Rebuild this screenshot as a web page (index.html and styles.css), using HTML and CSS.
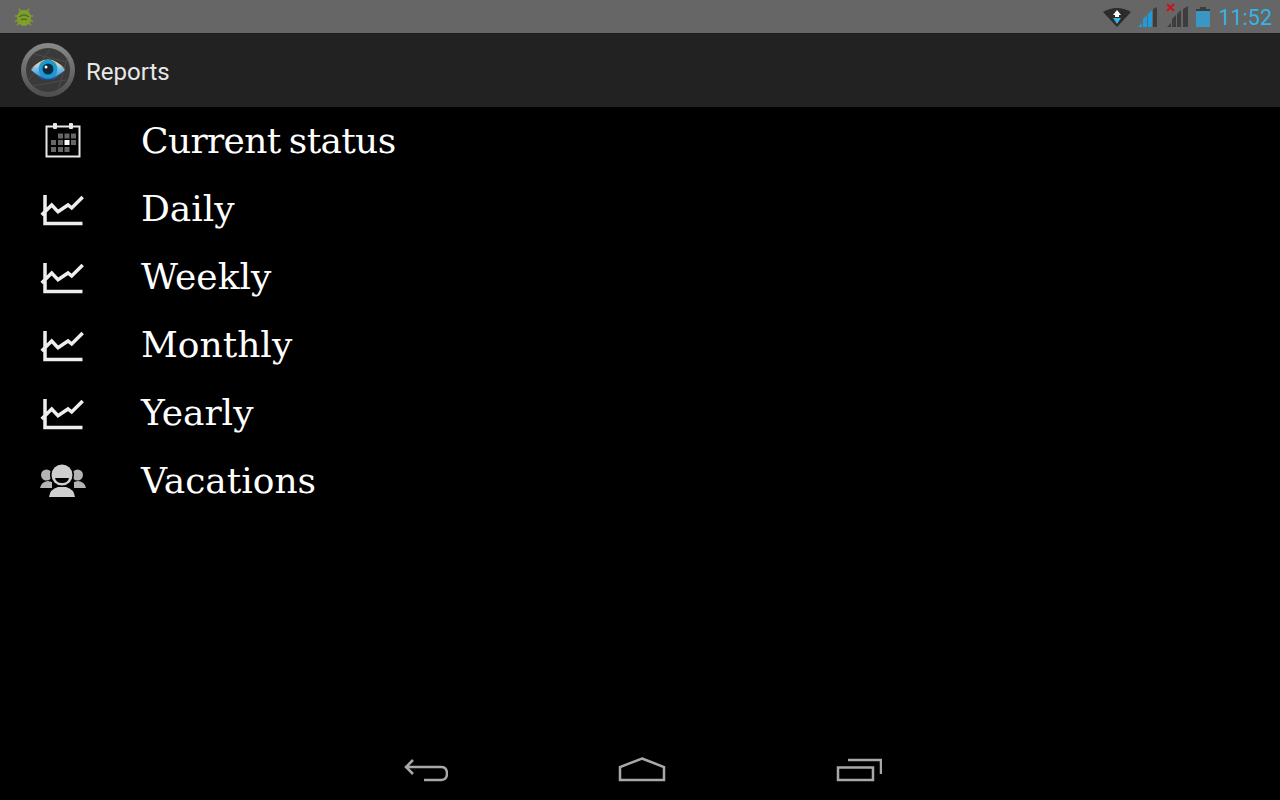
FILE: index.html
```html
<!DOCTYPE html>
<html lang="en">
<head>
  <meta charset="UTF-8">
  <title>Reports</title>
  <link rel="stylesheet" href="styles.css">
</head>
<body>

  <div class="status-bar">
    <svg class="bug soft" width="20" height="20" viewBox="0 0 20 20">
      <path d="M5 2l2 3M15 2l-2 3M1 9h3M16 9h3M1 14h3M16 14h3M3 18l2-2M17 18l-2-2" stroke="#7f9f2c" stroke-width="1.5"/>
      <ellipse cx="10" cy="11" rx="7" ry="8" fill="#7f9f2c"/>
      <path d="M5 10q5-4 10 0M7 13q3-2 6 0" stroke="#55701c" stroke-width="1.5" fill="none"/>
    </svg>
    <div class="status-icons">
      <svg class="soft" width="28" height="20" viewBox="0 0 28 20">
        <path d="M0 5Q14-3 28 5L14 20Z" fill="#2c2c2c"/>
        <path d="M14 3l4 5h-8zM12 8h4v2h-4z" fill="#fff"/>
        <path d="M10 11h8l-4 6z" fill="#33b5e5"/>
      </svg>
      <svg class="soft" width="21" height="20" viewBox="0 0 21 20">
        <path d="M0 20l4-4v4zM5 20v-8l4-4v12zM10 20V7l4-4v17z" fill="#1f9bdb"/>
        <path d="M15 20V2l4-2v20z" fill="#3d3d3d"/>
      </svg>
      <svg class="signal-off soft" width="23" height="24" viewBox="0 0 23 24">
        <path d="M1 24l4-4v4zM6 24V16l4-4v12zM11 24V11l4-4v17zM17 24V6l5-3v21z" fill="#3d3d3d"/>
        <path d="M1 1l7 7M8 1L1 8" stroke="#c8141a" stroke-width="2"/>
      </svg>
      <svg class="soft" width="14" height="20" viewBox="0 0 14 20">
        <path d="M4 0h6v2h4v18H0V2h4z" fill="#3d3d3d"/>
        <rect y="4" width="14" height="16" fill="#3a97c4"/>
      </svg>
      <span class="clock">11:52</span>
    </div>
  </div>

  <div class="action-bar">
    <svg class="logo" width="56" height="56" viewBox="0 0 56 56">
      <defs>
        <linearGradient id="ring" x1="0" y1="0" x2="0" y2="1">
          <stop offset="0" stop-color="#8a8a8a"/>
          <stop offset="1" stop-color="#4c4c4c"/>
        </linearGradient>
        <linearGradient id="iris" x1="0" y1="0" x2="0" y2="1">
          <stop offset="0" stop-color="#d8f0fa"/>
          <stop offset="1" stop-color="#2a8fd8"/>
        </linearGradient>
      </defs>
      <circle cx="28" cy="28" r="27" fill="url(#ring)"/>
      <circle cx="28" cy="28" r="22" fill="#3a3a3a"/>
      <path d="M9 38L30 7M14 12l33 8M47 16l-9 33M46 38L12 44" stroke="#4c4c4c" stroke-width="1"/>
      <path d="M11 28Q28 8 45 28Q28 44 11 28Z" fill="url(#iris)"/>
      <path d="M11 27Q28 8 45 27Q28 14 11 27Z" fill="#edc795"/>
      <path d="M16 33Q28 42 40 33Q28 38 16 33Z" fill="#1a63cc"/>
      <circle cx="28" cy="27" r="9.5" fill="#1c9ad0"/>
      <circle cx="28" cy="27" r="5.5" fill="#0b2a3c"/>
      <circle cx="26" cy="25" r="1.5" fill="#fff"/>
    </svg>
    <span class="title">Reports</span>
  </div>

  <div class="list">
    <div class="row">
      <svg class="icon" width="48" height="48" viewBox="0 0 48 48">
        <rect x="8.500" y="11.500" width="33" height="30" fill="none" stroke="#e8e8e8" stroke-width="2"/>
        <rect x="15" y="8" width="4" height="6" rx="1" fill="#e8e8e8"/>
        <rect x="31" y="8" width="4" height="6" rx="1" fill="#e8e8e8"/>
        <g fill="#666">
          <rect x="20" y="18.500" width="5" height="5"/><rect x="26.500" y="18.500" width="5" height="5"/><rect x="33" y="18.500" width="5" height="5"/>
          <rect x="13" y="25" width="5" height="5"/><rect x="20" y="25" width="5" height="5"/><rect x="33" y="25" width="5" height="5"/>
          <rect x="13" y="32" width="5" height="5"/><rect x="20" y="32" width="5" height="5"/><rect x="26.500" y="32" width="5" height="5"/>
        </g>
        <rect x="26.500" y="25" width="5" height="5" fill="#fff"/>
      </svg>
      <span class="label">Current status</span>
    </div>
    <div class="row">
      <svg class="icon" width="48" height="48" viewBox="0 0 48 48">
        <path class="chart" d="M7 12v28.500h37.500M3.700 32l10-10 6.300 6.700 10-6.700 3.700 3 11-11"/>
      </svg>
      <span class="label">Daily</span>
    </div>
    <div class="row">
      <svg class="icon" width="48" height="48" viewBox="0 0 48 48">
        <path class="chart" d="M7 12v28.500h37.500M3.700 32l10-10 6.300 6.700 10-6.700 3.700 3 11-11"/>
      </svg>
      <span class="label">Weekly</span>
    </div>
    <div class="row">
      <svg class="icon" width="48" height="48" viewBox="0 0 48 48">
        <path class="chart" d="M7 12v28.500h37.500M3.700 32l10-10 6.300 6.700 10-6.700 3.700 3 11-11"/>
      </svg>
      <span class="label">Monthly</span>
    </div>
    <div class="row">
      <svg class="icon" width="48" height="48" viewBox="0 0 48 48">
        <path class="chart" d="M7 12v28.500h37.500M3.700 32l10-10 6.300 6.700 10-6.700 3.700 3 11-11"/>
      </svg>
      <span class="label">Yearly</span>
    </div>
    <div class="row">
      <svg class="icon" width="48" height="48" viewBox="0 0 48 48">
        <g fill="#b4b4b4">
          <circle cx="8.500" cy="20" r="5.500"/><circle cx="39.500" cy="20" r="5.500"/>
          <path d="M2 33q1-6 8-7l4 1v6zM48 33q-1-6-8-7l-4 1v6z"/>
        </g>
        <circle cx="24" cy="20" r="12" fill="#000"/>
        <circle cx="24" cy="20" r="10.500" fill="#cfcfcf"/>
        <path d="M17 23h14q-1 5-7 5t-7-5z" fill="#000"/>
        <path d="M11 42q1-8 9-10h8q8 2 9 10z" fill="#cfcfcf"/>
      </svg>
      <span class="label">Vacations</span>
    </div>
  </div>

  <div class="nav-bar">
    <div class="nav-btn">
      <svg class="soft" width="44" height="24" viewBox="0 0 44 24">
        <path class="nav-icon" d="M9 2L2 9l7 7M2 9h35q6 0 6 6.500t-6 6.500H20"/>
      </svg>
    </div>
    <div class="nav-btn">
      <svg class="soft" width="48" height="26" viewBox="0 0 48 26">
        <path class="nav-icon" d="M24 1.500l22 8.500v13H2V10z"/>
      </svg>
    </div>
    <div class="nav-btn">
      <svg class="soft" width="48" height="24" viewBox="0 0 48 24">
        <path class="nav-icon" d="M4 9.500h35V22H4zM14 2h33v14"/>
      </svg>
    </div>
  </div>

</body>
</html>
```

FILE: styles.css
```css
html, body {
  margin: 0;
  height: 100%;
}

body {
  display: flex;
  flex-direction: column;
  background: #000;
  overflow: hidden;
  font-family: Roboto, sans-serif;
}

.soft {
  filter: blur(0.4px);
}

.status-bar {
  display: flex;
  align-items: center;
  justify-content: space-between;
  height: 33px;
  padding: 0 8px 0 14px;
  background: #666;
}

.status-icons {
  display: flex;
  align-items: center;
  gap: 7px;
}

.signal-off {
  margin-top: -4px;
}

.clock {
  margin: 2px 0 0 1px;
  font-size: 21.500px;
  color: #33b5e5;
}

.action-bar {
  display: flex;
  align-items: center;
  gap: 10px;
  height: 71px;
  padding: 0 0 2px 20px;
  border-top: 1px solid #1c1c1c;
  background: #222;
}

.logo {
  filter: blur(0.4px);
}

.title {
  margin-top: 4px;
  font-size: 24px;
  color: #e8e8e8;
}

.list {
  flex: 1;
  margin-top: -1px;
}

.row {
  display: flex;
  align-items: center;
  gap: 55px;
  height: 68px;
  padding-left: 38px;
}

.icon {
  margin-top: -2px;
  filter: blur(0.4px);
}

.label {
  font-family: "DejaVu Serif", serif;
  font-size: 36px;
  color: #fff;
}

.row:first-child .label {
  letter-spacing: -0.65px;
  word-spacing: -2.500px;
}

.chart {
  fill: none;
  stroke: #eee;
  stroke-width: 3.500;
}

.nav-bar {
  display: flex;
  justify-content: center;
  height: 60px;
  padding-left: 4px;
}

.nav-btn {
  display: flex;
  align-items: center;
  justify-content: center;
  width: 216px;
}

.nav-icon {
  fill: none;
  stroke: #a8a8a8;
  stroke-width: 2.500;
}
```
